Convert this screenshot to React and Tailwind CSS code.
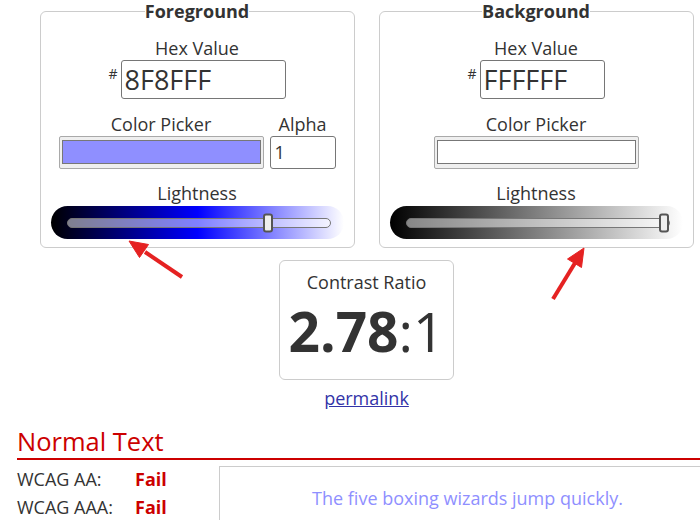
const HEX_INPUT = 'h-[39px] rounded-[3px] border border-[#767676] bg-white pl-[3px] text-[27px] leading-[37px] text-[#333]'

function Swatch({ color, className = '' }) {
  return (
    <div className={`h-[33px] rounded-[2px] border border-[#a9a9a9] bg-[#efefef] px-[2px] pt-[3px] pb-[4px] ${className}`}>
      <div className="h-full w-full border border-[#777]" style={{ background: color }} />
    </div>
  )
}

function Slider({ gradient, pos }) {
  return (
    <div className={`mx-auto mt-[1px] flex h-[33px] w-[293px] items-center rounded-full pl-[16px] pr-[13px] ${gradient}`}>
      <div className="relative h-[10px] flex-1 rounded-full border border-[#777] bg-white/50">
        {/* thumb */}
        <div
          className="absolute top-1/2 -ml-[5px] h-[19px] w-[10px] -translate-y-1/2 rounded-[3px] border-2 border-[#555] bg-[#eee]"
          style={{ left: `${pos * 100}%` }}
        />
      </div>
    </div>
  )
}

function Panel({ title, hex, hexWidth, color, alpha, gradient, pos }) {
  return (
    <fieldset className="w-[315px] rounded-[6px] border border-[#ccc] px-0 pb-[8px]">
      <legend className="mx-auto px-0 text-[18px] font-bold leading-[23px] text-[#333]">{title}</legend>
      <div className="pt-[14px] text-center text-[18px] leading-[23px]">Hex Value</div>
      <div className="flex justify-center">
        <span className="mr-[3px] mt-[6px] text-[14px] leading-[16px]">#</span>
        <div className={`${HEX_INPUT} ${hexWidth} text-left`}>{hex}</div>
      </div>
      <div className="mt-[13px] flex justify-center gap-[6px]">
        <div className="flex flex-col items-center">
          <div className="text-[18px] leading-[24px]">Color Picker</div>
          <Swatch color={color} className="w-[205px]" />
        </div>
        {alpha && (
          <div className="flex flex-col items-center">
            <div className="text-[18px] leading-[24px]">Alpha</div>
            <div className="h-[33px] w-[66px] rounded-[3px] border border-[#767676] pl-[4px] text-[18px] leading-[31px]">{alpha}</div>
          </div>
        )}
      </div>
      <div className="mt-[13px] text-center text-[18px] leading-[23px]">Lightness</div>
      <Slider gradient={gradient} pos={pos} />
    </fieldset>
  )
}

function Arrows() {
  return (
    <svg className="pointer-events-none absolute left-0 top-0" width="700" height="520" viewBox="0 0 700 520">
      <g fill="#e52222" stroke="#e52222">
        <line x1="182" y1="277" x2="145" y2="252" strokeWidth="4" />
        <polygon points="129,241 148.5,244.5 139.5,257.5" strokeWidth="1" />
        <line x1="553" y1="299" x2="575" y2="263" strokeWidth="4" />
        <polygon points="584,248 581.5,267.5 567.5,259" strokeWidth="1" />
      </g>
    </svg>
  )
}

export default function App() {
  return (
    <div className="relative h-[520px] w-[700px] overflow-hidden bg-white pl-[17px] font-['Open_Sans',sans-serif] text-[#333]">
      <div className="ml-[23px] flex w-[653px] flex-col items-center">
        <div className="flex gap-[24px]">
          <Panel
            title="Foreground"
            hex="8F8FFF"
            hexWidth="w-[165px]"
            color="#8f8fff"
            alpha="1"
            gradient="bg-[linear-gradient(to_right,#000,#00f,#fff)]"
            pos={0.767}
          />
          <Panel
            title="Background"
            hex="FFFFFF"
            hexWidth="w-[125px]"
            color="#ffffff"
            gradient="bg-[linear-gradient(to_right,#000,#fff)]"
            pos={0.981}
          />
        </div>

        <div className="mt-[12px] flex h-[120px] w-[175px] flex-col items-center rounded-[6px] border border-[#ccc] pt-[10px]">
          <div className="text-[18px] leading-[23px]">Contrast Ratio</div>
          <div className="mt-[9px] text-[55px] leading-[56px]">
            <span className="font-bold">2.78</span>:1
          </div>
        </div>
        <a href="#" className="mt-[6px] text-[18px] leading-[24px] text-[#3333a8] underline">permalink</a>
      </div>

      <h2 className="mt-[15px] w-[700px] border-b-2 border-b-[#cc0000] pb-[1px] text-[25.5px] leading-[32px] text-[#c00]">Normal Text</h2>
      <div className="mt-[5px] flex items-start">
        <div className="w-[202px] shrink-0 text-[18px] leading-[28px]">
          <div className="flex"><span className="w-[118px]">WCAG AA:</span><span className="font-bold text-[#c00]">Fail</span></div>
          <div className="flex"><span className="w-[118px]">WCAG AAA:</span><span className="font-bold text-[#c00]">Fail</span></div>
        </div>
        <div className="mt-[1px] h-[100px] w-[497px] shrink-0 border border-[#ccc] pt-[19px] text-center text-[18px] leading-[24px] text-[#8f8fff]">
          The five boxing wizards jump quickly.
        </div>
      </div>

      <Arrows />
    </div>
  )
}
